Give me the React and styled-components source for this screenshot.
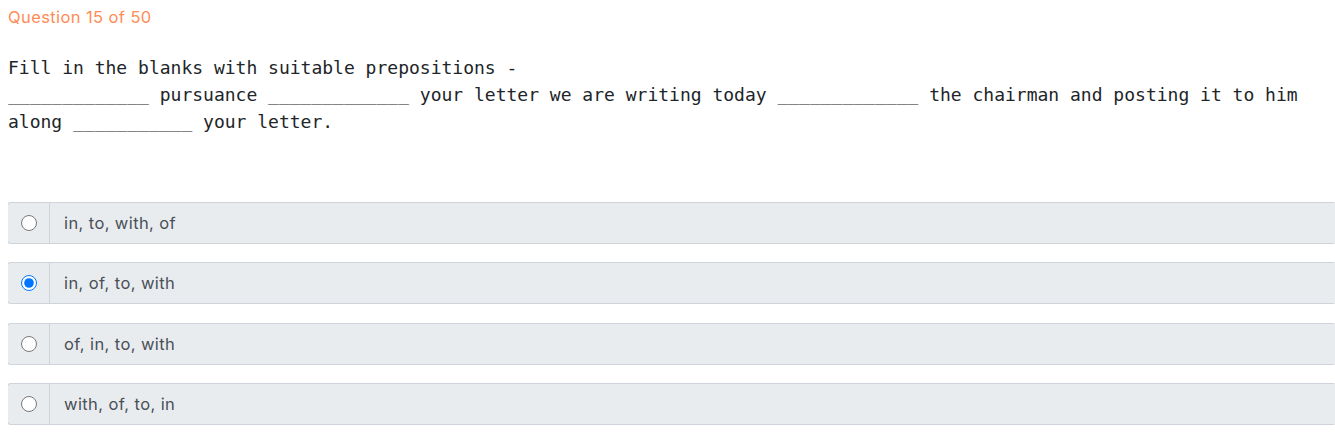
import React from "react";
import styled, { createGlobalStyle } from "styled-components";

const GlobalStyle = createGlobalStyle`
  html {
    overflow-x: hidden;
  }
  body {
    margin: 8px 0 8px 8px;
    background: #fff;
    font-family: Inter, "Noto Sans", sans-serif;
  }
`;

const QuizBlock = styled.div`
  display: block;
`;

const Counter = styled.div`
  font-size: 16.5px;
  line-height: 18px;
  letter-spacing: 0.4px;
  color: #ff8c55;
`;

const QuestionText = styled.pre`
  margin: 28px 0 0;
  max-width: 1319px;
  font-family: "DejaVu Sans Mono", "Liberation Mono", monospace;
  font-size: 18px;
  line-height: 27px;
  color: #212529;
  white-space: pre-wrap;
`;

const OptionList = styled.div`
  display: flex;
  flex-direction: column;
  gap: 18.67px;
  width: calc(100% + 1px);
  margin: 66.5px 0 0 -1px;
`;

const OptionRow = styled.label`
  display: flex;
  align-items: stretch;
  height: 42px;
  box-sizing: border-box;
  background: #e9ecef;
  border: 1px solid #ced4da;
  border-right-color: #e9ecef;
  border-radius: 4px 0 0 4px;
  cursor: pointer;
`;

const RadioCell = styled.div`
  display: flex;
  align-items: center;
  justify-content: center;
  width: 41px;
  border-right: 1px solid #ced4da;
  input {
    margin: 0;
    width: 16px;
    height: 16px;
  }
`;

const OptionText = styled.div`
  display: flex;
  align-items: center;
  padding-left: 14px;
  font-size: 16.5px;
  letter-spacing: 0.4px;
  color: #495057;
`;

const options = [
  "in, to, with, of",
  "in, of, to, with",
  "of, in, to, with",
  "with, of, to, in",
];

const App = () => {
  return (
    <QuizBlock>
      <GlobalStyle />
      <Counter>Question 15 of 50</Counter>
      <QuestionText>
        {"Fill in the blanks with suitable prepositions -\n_____________ pursuance _____________ your letter we are writing today _____________ the chairman and posting it to him along ___________ your letter."}
      </QuestionText>
      <OptionList>
        {options.map((opt, i) => (
          <OptionRow key={opt}>
            <RadioCell>
              <input type="radio" name="answer" defaultChecked={i === 1} />
            </RadioCell>
            <OptionText>{opt}</OptionText>
          </OptionRow>
        ))}
      </OptionList>
    </QuizBlock>
  );
};

export default App;
